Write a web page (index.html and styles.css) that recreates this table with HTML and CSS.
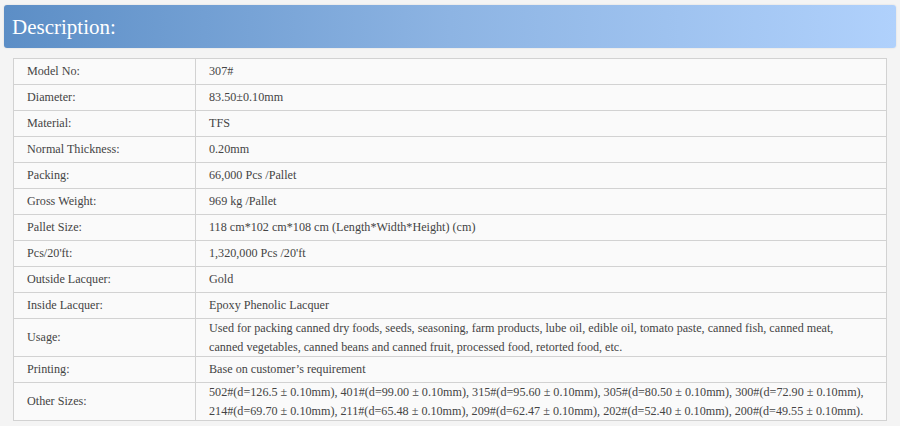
FILE: index.html
```html
<!DOCTYPE html>
<html>
<head>
<meta charset="utf-8">
<link rel="stylesheet" href="styles.css">
</head>
<body>
<div class="page">
  <div class="title-bar"><h2 class="title">Description:</h2></div>
  <div class="table-wrap">
    <table class="spec">
      <colgroup><col class="c1"><col class="c2"></colgroup>
      <tbody>
        <tr><td>Model No:</td><td>307#</td></tr>
        <tr><td>Diameter:</td><td>83.50±0.10mm</td></tr>
        <tr><td>Material:</td><td>TFS</td></tr>
        <tr><td>Normal Thickness:</td><td>0.20mm</td></tr>
        <tr><td>Packing:</td><td>66,000 Pcs /Pallet</td></tr>
        <tr><td>Gross Weight:</td><td>969 kg /Pallet</td></tr>
        <tr><td>Pallet Size:</td><td>118 cm*102 cm*108 cm (Length*Width*Height) (cm)</td></tr>
        <tr><td>Pcs/20'ft:</td><td>1,320,000 Pcs /20'ft</td></tr>
        <tr><td>Outside Lacquer:</td><td>Gold</td></tr>
        <tr><td>Inside Lacquer:</td><td>Epoxy Phenolic Lacquer</td></tr>
        <tr class="multi"><td>Usage:</td><td>Used for packing canned dry foods, seeds, seasoning, farm products, lube oil, edible oil, tomato paste, canned fish, canned meat, canned vegetables, canned beans and canned fruit, processed food, retorted food, etc.</td></tr>
        <tr><td>Printing:</td><td>Base on customer’s requirement</td></tr>
        <tr class="multi"><td>Other Sizes:</td><td>502#(d=126.5 ± 0.10mm), 401#(d=99.00 ± 0.10mm), 315#(d=95.60 ± 0.10mm), 305#(d=80.50 ± 0.10mm), 300#(d=72.90 ± 0.10mm), 214#(d=69.70 ± 0.10mm), 211#(d=65.48 ± 0.10mm), 209#(d=62.47 ± 0.10mm), 202#(d=52.40 ± 0.10mm), 200#(d=49.55 ± 0.10mm).</td></tr>
      </tbody>
    </table>
  </div>
</div>
</body>
</html>
```
FILE: styles.css
```css
html, body {
  margin: 0;
  padding: 0;
  background: #f4f4f4;
}
.page {
  padding: 5px 4px 0 4px;
  font-family: "Liberation Serif", "Times New Roman", serif;
}
.title-bar {
  height: 43px;
  border-radius: 3px;
  background: linear-gradient(to right, #5c8ec6 0%, #8db4e3 50%, #b0d1fc 100%);
  box-shadow: 0 0 2px rgba(0,0,0,0.12);
  display: flex;
  align-items: center;
  padding-left: 8px;
}
.title {
  margin: 0;
  font-weight: normal;
  font-size: 21px;
  color: #ffffff;
  line-height: 1;
  padding-top: 1px;
}
.table-wrap {
  padding: 10px 9px 0 9px;
}
.spec {
  width: 100%;
  border-collapse: collapse;
  background: #fafafa;
  font-size: 12.15px;
  color: #444;
}
.c1 { width: 182px; }
.spec td {
  border: 1px solid #d2d2d2;
  padding: 3px 13px;
  line-height: 19px;
  vertical-align: middle;
  text-align: left;
}
.spec tr.multi td {
  padding: 0 20px 0 13px;
  line-height: 18.5px;
}
```
